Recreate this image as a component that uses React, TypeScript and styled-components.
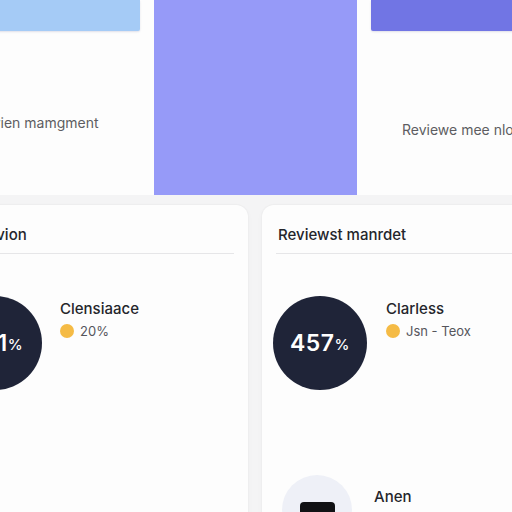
import React from "react";
import styled, { createGlobalStyle } from "styled-components";

const GlobalStyle = createGlobalStyle`
  html, body {
    margin: 0;
    padding: 0;
    background: #f4f4f5;
    overflow: hidden;
    font-family: Inter, "Noto Sans", "Liberation Sans", sans-serif;
  }
`;

const Page = styled.div`
  width: 640px;
  margin-left: -63px;
  display: flex;
  flex-direction: column;
  gap: 10px;
`;

const TopRow = styled.div`
  display: grid;
  grid-template-columns: repeat(3, 203px);
  margin-left: 14px;
`;

const TopCard = styled.div<{ $fill?: string }>`
  height: 195px;
  background: ${({ $fill }) => $fill || "#fdfdfd"};
  padding: 0 14px;
  box-sizing: border-box;
  display: flex;
  flex-direction: column;
`;

const Bar = styled.div<{ $color: string }>`
  height: 31px;
  background: ${({ $color }) => $color};
  border-radius: 0 0 2px 2px;
  box-shadow: 0 1px 2px rgba(60, 60, 120, 0.15);
`;

const TopText = styled.div<{ $indent: number; $top: number }>`
  margin-top: ${({ $top }) => $top}px;
  margin-left: ${({ $indent }) => $indent}px;
  font-size: 14px;
  line-height: 18px;
  color: #5d5d62;
  white-space: nowrap;
`;

const BottomRow = styled.div`
  display: grid;
  grid-template-columns: 311px 311px;
  gap: 14px;
`;

const Card = styled.div`
  height: 320px;
  background: #fdfdfd;
  border-radius: 12px;
  box-shadow: 0 0 0 1px #eeeeef, 0 2px 6px rgba(0, 0, 0, 0.03);
  padding: 0 14px;
  box-sizing: border-box;
`;

const CardHeader = styled.div`
  padding: 20px 2px 0;
  height: 49px;
  box-sizing: border-box;
  border-bottom: 1px solid #e6e6e8;
  font-size: 15px;
  line-height: 20px;
  font-weight: 500;
  color: #24252b;
  white-space: nowrap;
  overflow: hidden;
`;

const Item = styled.div<{ $top: number; $left: number; $gap: number }>`
  display: flex;
  align-items: flex-start;
  margin-top: ${({ $top }) => $top}px;
  margin-left: ${({ $left }) => $left}px;
  gap: ${({ $gap }) => $gap}px;
`;

const Score = styled.div`
  width: 94px;
  height: 94px;
  border-radius: 50%;
  background: #1f2438;
  color: #ffffff;
  display: flex;
  align-items: center;
  justify-content: center;
  font-size: 23px;
  font-weight: 600;
  letter-spacing: 0.5px;
  flex-shrink: 0;

  & > small {
    font-size: 15px;
    font-weight: 500;
    margin-top: 2px;
  }
`;

const Avatar = styled.div`
  width: 70px;
  height: 70px;
  border-radius: 50%;
  background: #eef0f7;
  display: flex;
  justify-content: center;
  padding-top: 27px;
  box-sizing: border-box;
  flex-shrink: 0;
`;

const Visor = styled.div`
  width: 35px;
  height: 16px;
  border-radius: 4px;
  background: #111114;
`;

const Info = styled.div<{ $pad: number }>`
  padding-top: ${({ $pad }) => $pad}px;
  display: flex;
  flex-direction: column;
  gap: 3px;
`;

const Title = styled.div`
  font-size: 15px;
  line-height: 20px;
  font-weight: 500;
  color: #24252b;
  white-space: nowrap;
`;

const Meta = styled.div`
  display: flex;
  align-items: center;
  gap: 6px;
  font-size: 13px;
  line-height: 18px;
  color: #55565c;
  white-space: nowrap;
`;

const Dot = styled.span`
  width: 14px;
  height: 14px;
  border-radius: 50%;
  background: #f5bb45;
`;

export default function App() {
  return (
    <>
      <GlobalStyle />
      <Page>
        <TopRow>
          <TopCard>
            <Bar $color="#a5cbf6" />
            <TopText $indent={11} $top={83}>
              Revien mamgment
            </TopText>
          </TopCard>
          <TopCard $fill="#969af8" />
          <TopCard>
            <Bar $color="#7175e4" />
            <TopText $indent={31} $top={90}>
              Reviewe mee nlos
            </TopText>
          </TopCard>
        </TopRow>
        <BottomRow>
          <Card>
            <CardHeader>Revie vion</CardHeader>
            <Item $top={42} $left={-3} $gap={18}>
              <Score>
                451<small>%</small>
              </Score>
              <Info $pad={3}>
                <Title>Clensiaace</Title>
                <Meta>
                  <Dot />
                  20%
                </Meta>
              </Info>
            </Item>
          </Card>
          <Card>
            <CardHeader>Reviewst manrdet</CardHeader>
            <Item $top={42} $left={-3} $gap={19}>
              <Score>
                457<small>%</small>
              </Score>
              <Info $pad={3}>
                <Title>Clarless</Title>
                <Meta>
                  <Dot />
                  Jsn - Teox
                </Meta>
              </Info>
            </Item>
            <Item $top={85} $left={6} $gap={22}>
              <Avatar>
                <Visor />
              </Avatar>
              <Info $pad={12}>
                <Title>Anen</Title>
                <Meta>•••</Meta>
              </Info>
            </Item>
          </Card>
        </BottomRow>
      </Page>
    </>
  );
}
